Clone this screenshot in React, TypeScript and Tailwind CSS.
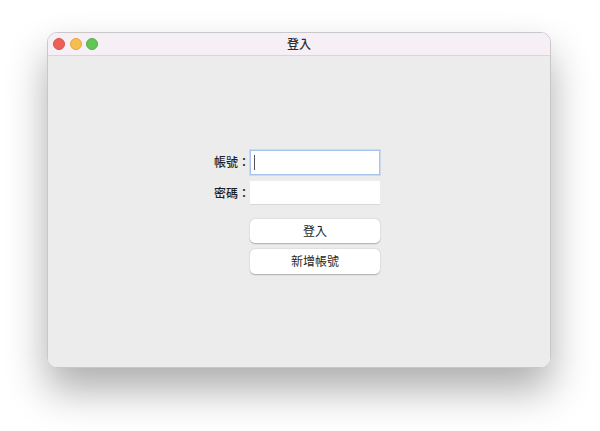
import * as React from 'react';

const font = { fontFamily: '"Noto Sans CJK TC", "Noto Sans", sans-serif' };

function TrafficLights() {
  return (
    <div className="flex items-center gap-[4.6px] pl-[5px]">
      <span className="w-[12px] h-[12px] rounded-full bg-[#ee5f58] border border-[#d9504a]" />
      <span className="w-[12px] h-[12px] rounded-full bg-[#f6be4f] border border-[#dea63c]" />
      <span className="w-[12px] h-[12px] rounded-full bg-[#62c655] border border-[#52ad46]" />
    </div>
  );
}

export default function App() {
  return (
    <div className="w-[600px] h-[431px] bg-white pt-[32px] pl-[47px]" style={font}>
      <div className="w-[504px] h-[336px] rounded-[10px] overflow-hidden flex flex-col border border-[#c8c8c8] shadow-[0_22px_40px_rgba(0,0,0,0.32)]">
        <div className="relative h-[23px] shrink-0 bg-[#f6f0f6] border-b border-[#d9d5d9] flex items-center">
          <TrafficLights />
          <p className="absolute inset-0 flex items-center justify-center text-[12px] font-medium text-[#2e2e2e]">
            登入
          </p>
        </div>
        <div className="flex-1 bg-[#ececec] flex items-center justify-center pr-[4px]">
          <div className="grid grid-cols-[auto_130px] items-center">
            <p className="text-[12px] font-medium text-[#1f1f1f] text-right">帳號：</p>
            <div className="h-[25px] bg-white border border-[#a6c4ee] shadow-[0_0_0_1px_rgba(150,185,235,0.35)] flex items-center pl-[3px]">
              <span className="w-[1px] h-[15px] bg-[#555]" />
            </div>
            <p className="text-[12px] font-medium text-[#1f1f1f] text-right mt-[6px]">密碼：</p>
            <div className="h-[24px] mt-[6px] bg-white border-b border-[#d8d8d8]" />
            <div />
            <button className="h-[24px] mt-[14px] bg-white rounded-[5px] shadow-[0_0.5px_1.5px_rgba(0,0,0,0.28)] text-[12px] text-[#1f1f1f]">
              登入
            </button>
            <div />
            <button className="h-[25px] mt-[6px] bg-white rounded-[5px] shadow-[0_0.5px_1.5px_rgba(0,0,0,0.28)] text-[12px] text-[#1f1f1f]">
              新增帳號
            </button>
          </div>
        </div>
      </div>
    </div>
  );
}
